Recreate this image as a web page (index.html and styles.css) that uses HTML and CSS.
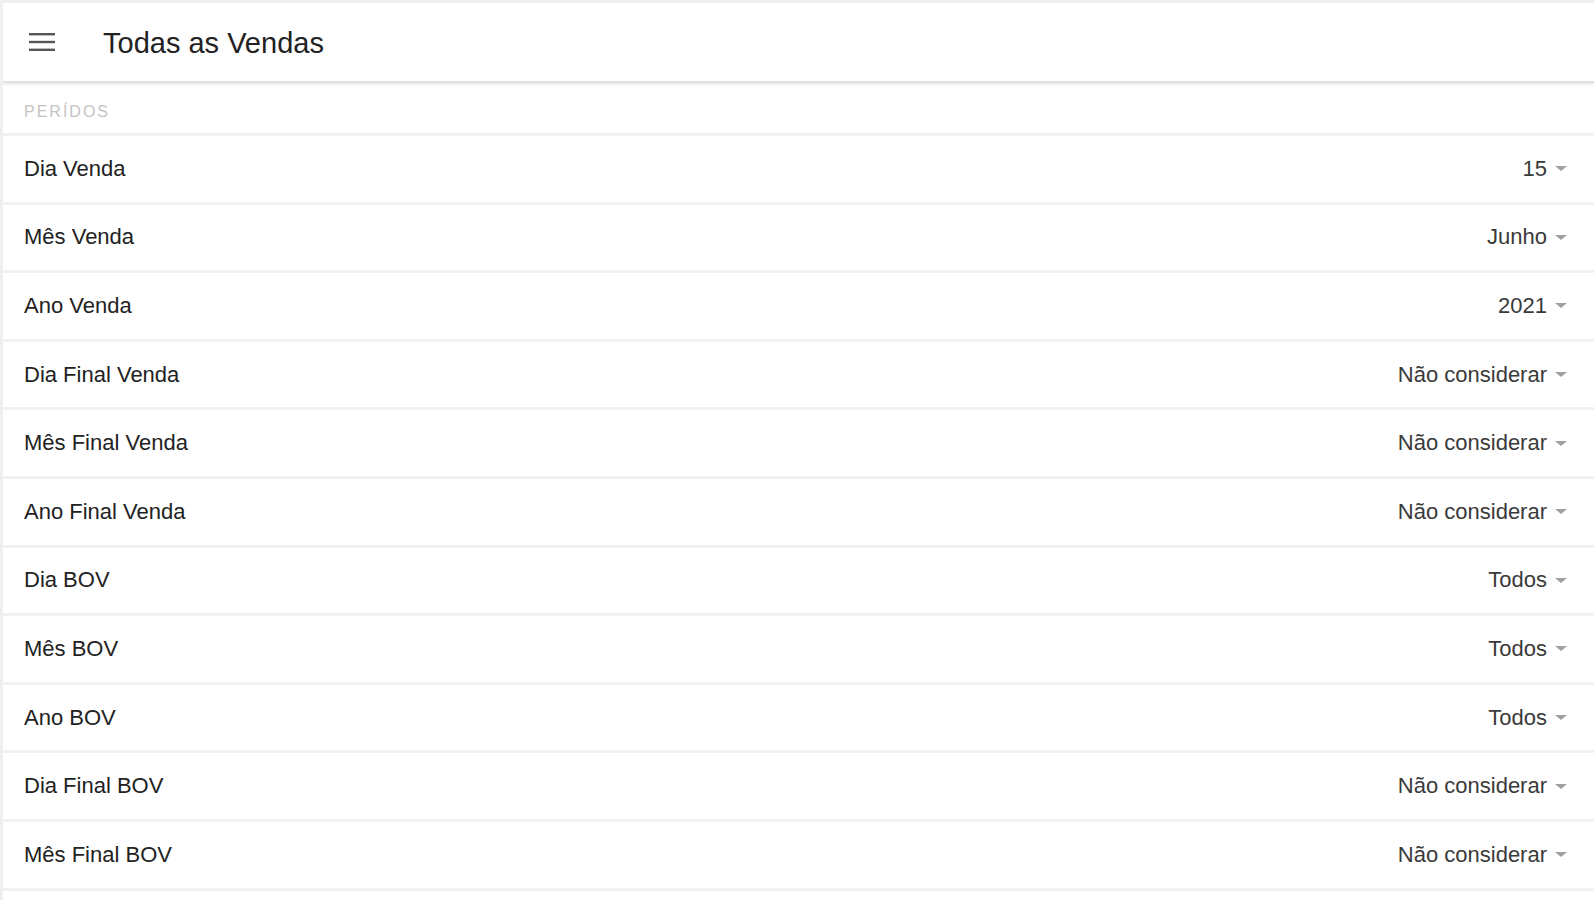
FILE: index.html
```html
<!DOCTYPE html>
<html lang="pt">
<head>
    <meta charset="UTF-8">
    <title>Todas as Vendas</title>
    <link rel="stylesheet" href="styles.css">
</head>
<body>
    <div class="page">
        <div class="toolbar">
            <button class="menu-btn" aria-label="menu">
                <svg width="26" height="18" viewBox="0 0 26 18">
                    <rect x="0" y="0" width="26" height="2.4" fill="#555"/>
                    <rect x="0" y="7.8" width="26" height="2.4" fill="#555"/>
                    <rect x="0" y="15.6" width="26" height="2.4" fill="#555"/>
                </svg>
            </button>
            <h1 class="title">Todas as Vendas</h1>
        </div>

        <div class="list">
            <div class="list-header">Perídos</div>

            <div class="item"><span class="label">Dia Venda</span><span class="select">15<i class="arrow"></i></span></div>
            <div class="item"><span class="label">Mês Venda</span><span class="select">Junho<i class="arrow"></i></span></div>
            <div class="item"><span class="label">Ano Venda</span><span class="select">2021<i class="arrow"></i></span></div>
            <div class="item"><span class="label">Dia Final Venda</span><span class="select">Não considerar<i class="arrow"></i></span></div>
            <div class="item"><span class="label">Mês Final Venda</span><span class="select">Não considerar<i class="arrow"></i></span></div>
            <div class="item"><span class="label">Ano Final Venda</span><span class="select">Não considerar<i class="arrow"></i></span></div>
            <div class="item"><span class="label">Dia BOV</span><span class="select">Todos<i class="arrow"></i></span></div>
            <div class="item"><span class="label">Mês BOV</span><span class="select">Todos<i class="arrow"></i></span></div>
            <div class="item"><span class="label">Ano BOV</span><span class="select">Todos<i class="arrow"></i></span></div>
            <div class="item"><span class="label">Dia Final BOV</span><span class="select">Não considerar<i class="arrow"></i></span></div>
            <div class="item"><span class="label">Mês Final BOV</span><span class="select">Não considerar<i class="arrow"></i></span></div>
        </div>
    </div>
</body>
</html>
```

FILE: styles.css
```css
* {
    box-sizing: border-box;
    margin: 0;
    padding: 0;
}

html, body {
    height: 100%;
    overflow: hidden;
}

body {
    font-family: 'Liberation Sans', Arial, sans-serif;
    background-color: #fff;
    color: #222;
}

.page {
    height: 100vh;
    border-top: 3px solid #efefef;
    border-left: 3px solid #efefef;
    overflow: hidden;
}

.toolbar {
    height: 80px;
    display: flex;
    align-items: center;
    padding-left: 26px;
    background: #fff;
    border-bottom: 2px solid #e2e2e2;
    box-shadow: 0 1px 3px rgba(0, 0, 0, 0.12);
    position: relative;
    z-index: 1;
}

.menu-btn {
    background: none;
    border: none;
    display: flex;
    margin-top: -1px;
}

.title {
    margin-left: 48px;
    font-size: 29px;
    font-weight: normal;
    color: #222;
    margin-top: 2px;
}

.list-header {
    height: 50px;
    display: flex;
    align-items: center;
    padding: 8px 0 0 21px;
    font-size: 16px;
    letter-spacing: 2px;
    text-transform: uppercase;
    color: #c4c4c4;
}

.item {
    height: 68.6px;
    border-top: 3px solid #f1f1f1;
    display: flex;
    align-items: center;
    justify-content: space-between;
    padding: 0 27px 0 21px;
    font-size: 22px;
}

.item:last-child {
    height: 71.6px;
    border-bottom: 3px solid #f1f1f1;
}

.label {
    color: #222;
}

.select {
    display: flex;
    align-items: center;
    color: #3a3a3a;
}

.arrow {
    width: 0;
    height: 0;
    margin-left: 8px;
    border-top: 5px solid #a0a0a0;
    border-left: 6px solid transparent;
    border-right: 6px solid transparent;
}
```
